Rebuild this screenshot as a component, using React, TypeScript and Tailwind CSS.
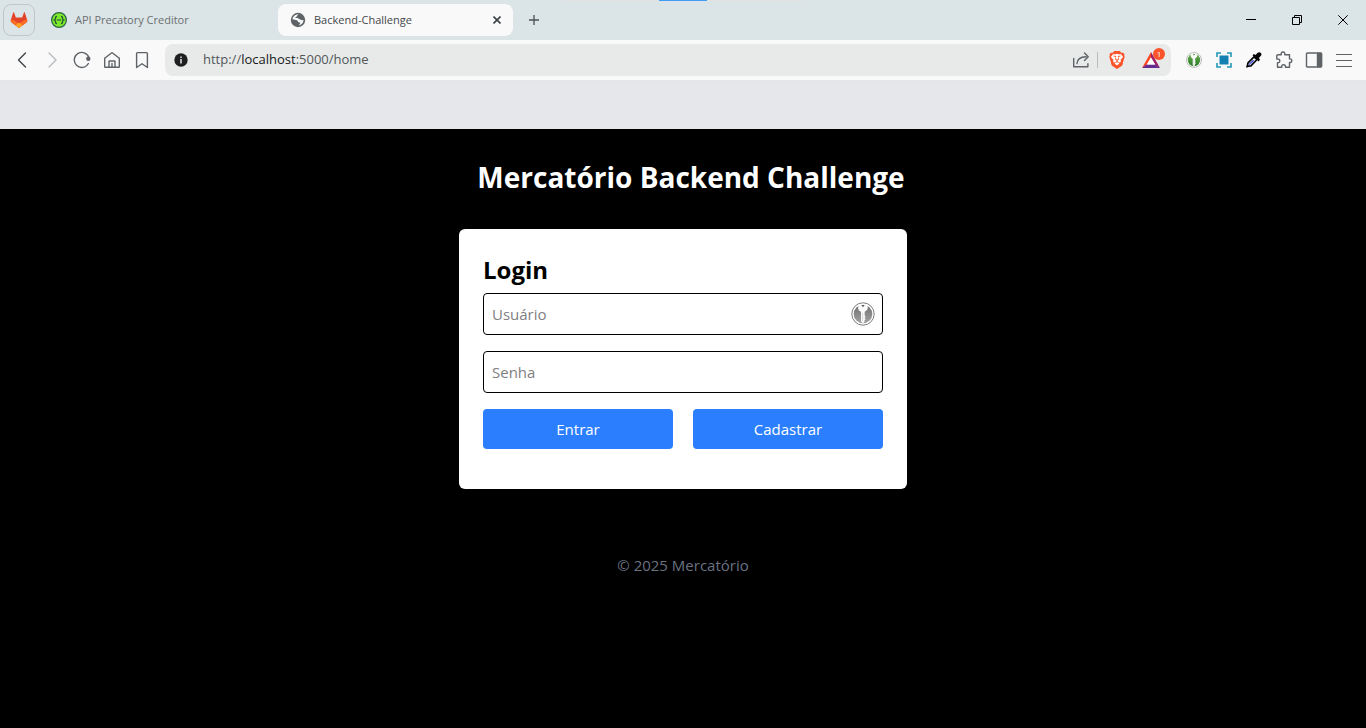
import type { ReactNode } from 'react';
import { SiBrave } from 'react-icons/si';

function GitlabIcon() {
  return (
    <svg viewBox="0 0 18 18" className="size-[18px]" aria-hidden="true">
      <path d="M9 17 1.6 11.5a2.2 2.2 0 0 1-.8-2.4L3.2 1.5c.1-.4.6-.4.8 0L5.9 6.6h6.2L14 1.5c.2-.4.7-.4.8 0l2.4 7.600c.3.9 0 1.9-.8 2.400z" fill="#e24329" />
      <path d="M9 17 5.5 14.3 1.6 11.5a2.200 2.200 0 0 1-.8-2.400L1 8.400c1.500.1 3 .8 4.200 1.700L9 13l3.800-2.900C14 9.200 15.500 8.500 17 8.400l.2.7c.3.9 0 1.900-.8 2.400z" fill="#fc6d26" />
      <path d="M9 17l-3.600-2.700L9 11.500l3.600 2.800z" fill="#fca326" />
    </svg>
  );
}

function SwaggerIcon() {
  return (
    <svg viewBox="0 0 16 16" className="size-4 shrink-0" aria-hidden="true">
      <circle cx="8" cy="8" r="7.4" fill="#7ce82a" stroke="#2d6546" strokeWidth="1.2" />
      <path d="M6 4.300c-1.300 0-1.500.5-1.500 1.600S4.300 7.700 3.400 8c.9.300 1.100 1 1.100 2.100s.2 1.600 1.500 1.600M10 4.300c1.300 0 1.500.5 1.500 1.600s.2 1.800 1.100 2.100c-.9.300-1.100 1-1.100 2.100s-.2 1.600-1.500 1.600M5.800 8h4.400" fill="none" stroke="#204b38" strokeWidth="1.2" />
    </svg>
  );
}

function GlobeIcon() {
  return (
    <svg viewBox="0 0 16 16" className="size-4 shrink-0" aria-hidden="true">
      <circle cx="8" cy="8" r="7.2" fill="#5f6368" />
      <path d="M8.800 2.200c-.8.500-1.700.7-1.600 1.600.1.700-.7.900-1.400 1.100-.5.200-.3 1 .2 1.200.9.200 2.200-.2 2.700.6.400.7 1.500.4 2.100 1 .5.500 1.200.5 2.700.4-.1 2.800-1.800 4.700-4.400 5.300.2-1.100 1.200-1.300 1.100-2.300-.1-.9-1.200-.8-1.900-1.200-.8-.5-.5-1.500-1.400-1.600C5.500 8.200 4.300 7.400 2.500 7.300c.2-3 3.300-5.300 6.300-5.100z" fill="#f9f9f9" />
      <path d="M3 9.200c.9 0 2.400 0 2.700 1 .2.800.9.900 1 1.700 0 .6-.4 1-.7 1.300A5.600 5.600 0 0 1 3 9.200z" fill="#5f6368" />
      <path d="M9.800 3.600c.9.100 1.800.6 2.300 1.300-.5.700-1.500.6-2 .1-.4-.4-.6-.9-.3-1.400z" fill="#5f6368" />
    </svg>
  );
}

function LineIcon({ children, className = 'text-[#5f6368]' }: { children: ReactNode; className?: string }) {
  return (
    <svg viewBox="0 0 18 18" className={`size-[18px] ${className}`} fill="none" stroke="currentColor" strokeWidth="1.4" strokeLinecap="round" strokeLinejoin="round" aria-hidden="true">
      {children}
    </svg>
  );
}

function KeyBadge({ tone, className }: { tone: 'green' | 'gray'; className: string }) {
  const id = `key-${tone}`;
  return (
    <svg viewBox="0 0 24 24" className={className} aria-hidden="true">
      <defs>
        <linearGradient id={id} x1="0" y1="0" x2="0" y2="1">
          <stop offset="0" stopColor={tone === 'green' ? '#6fae57' : '#707070'} />
          <stop offset="1" stopColor={tone === 'green' ? '#257a20' : '#a2a2a2'} />
        </linearGradient>
      </defs>
      <circle cx="12" cy="12" r="11.2" fill="#fff" stroke={tone === 'green' ? '#999' : '#7c7c7c'} strokeWidth="1" />
      <circle cx="12" cy="12" r="9.3" fill={`url(#${id})`} />
      <path d="M8.200 2.500 7.100 5.200c-.3 1.800.8 3.700 2.900 4.600v9.800l1.800 1.700 1.700-1.600v-1.500l1.200-1.100-1.200-1.200 1.200-1.300-1-.9V9.700c2.200-1.100 3.400-2.800 3.100-4.700l-1.100-2.500-3.700-.8z" fill="#fafafa" />
      <path d="M10.400 3h3.200L12 5.200z" fill={tone === 'green' ? '#3d7936' : '#555'} />
      <path d="M11.600 11v8" stroke="#ccc" strokeWidth=".8" />
    </svg>
  );
}

function ToolButton({ label, children }: { label: string; children: ReactNode }) {
  return (
    <button type="button" aria-label={label} className="flex size-[30px] items-center justify-center">
      {children}
    </button>
  );
}

function WindowButton({ label, children }: { label: string; children: ReactNode }) {
  return (
    <button type="button" aria-label={label} className="flex h-10 w-[46px] items-center justify-center">
      <svg viewBox="0 0 10 10" className="size-[10px]" fill="none" stroke="#000" aria-hidden="true">
        {children}
      </svg>
    </button>
  );
}

function TabStrip() {
  return (
    <div className="relative flex h-10 items-center gap-1 bg-[#dbe4e6] pl-[3px] text-[11px]">
      <button type="button" aria-label="GitLab" className="flex size-8 items-center justify-center rounded-lg border border-[#c1c7c9]">
        <GitlabIcon />
      </button>
      <button type="button" className="flex h-8 w-[235px] items-center gap-2 px-3 text-[#6b7072]">
        <SwaggerIcon />
        <span>API Precatory Creditor</span>
      </button>
      <div className="flex h-8 w-[235px] items-center gap-2 rounded-lg bg-[#f9f9f9] px-3 text-[#44484a]">
        <GlobeIcon />
        <span className="flex-1">Backend-Challenge</span>
        <button type="button" aria-label="Close tab">
          <svg viewBox="0 0 8 8" className="size-2" stroke="#3c4043" strokeWidth="1.6" aria-hidden="true">
            <path d="M.5.5l7 7M7.500.5l-7 7" />
          </svg>
        </button>
      </div>
      <button type="button" aria-label="New tab" className="flex size-[34px] items-center justify-center">
        <svg viewBox="0 0 10 10" className="size-[10px]" stroke="#4b5154" strokeWidth="1.3" aria-hidden="true">
          <path d="M5 0v10M0 5h10" />
        </svg>
      </button>
      <div className="ml-auto flex">
        <WindowButton label="Minimize"><path d="M0 4.500h10" /></WindowButton>
        <WindowButton label="Restore"><path d="M.5 2.500h7v7h-7zM2.500 2.500v-2h7v7h-2" /></WindowButton>
        <WindowButton label="Close"><path d="M.3.3l9.400 9.400M9.700.3.3 9.700" /></WindowButton>
      </div>
      <div className="absolute inset-x-0 top-0 mx-auto flex h-px w-[242px] justify-center bg-[#e3e3e3]">
        <div className="w-12 bg-[#429bf5]" />
      </div>
    </div>
  );
}

function Toolbar() {
  return (
    <div className="flex h-[41px] items-center gap-2 border-b border-[#e4e5e6] bg-[#f9f9f9] px-[7px]">
      <div className="flex">
        <ToolButton label="Back"><LineIcon className="text-[#3f4447]"><path d="M12.500 2 5.500 9l7 7" /></LineIcon></ToolButton>
        <ToolButton label="Forward"><LineIcon className="text-[#b9bcbe]"><path d="m6 2 7 7-7 7" /></LineIcon></ToolButton>
        <ToolButton label="Reload">
          <LineIcon>
            <path d="M15.400 12.500a7.500 7.500 0 1 1 .7-5.300" />
            <circle cx="15.300" cy="7.800" r="1.500" fill="currentColor" />
          </LineIcon>
        </ToolButton>
        <ToolButton label="Home">
          <LineIcon><path d="M1.700 7.600v8.200c0 .3.200.5.500.5h13.600c.3 0 .5-.2.500-.5V7.600c0-.3-.1-.5-.3-.6L9.500 2a.8.8 0 0 0-1 0L2 7c-.2.1-.3.300-.3.600zM6 16v-5.500c0-.3.200-.5.500-.5h5c.3 0 .5.200.5.500V16M9 12.500V16" /></LineIcon>
        </ToolButton>
        <ToolButton label="Bookmark">
          <LineIcon><path d="M3.600 16.500V2.400c0-.5.300-.8.800-.8h9.200c.5 0 .8.300.8.800v14.100L9 12.700z" /></LineIcon>
        </ToolButton>
      </div>
      <div className="flex h-8 flex-1 items-center rounded-lg bg-[#e8eae9] pr-2 pl-[9px]">
        <button type="button" aria-label="Site information" className="mr-[15px]">
          <svg viewBox="0 0 14 14" className="size-[14px]" aria-hidden="true">
            <circle cx="7" cy="7" r="6.7" fill="#1d1f20" />
            <path d="M7 3.400v1.500M7 6v4.400" stroke="#e8eae9" strokeWidth="1.5" />
          </svg>
        </button>
        <div className="flex-1 text-[13px] text-[#51575a]">
          http://<span className="text-[#16191b]">localhost</span>:5000/home
        </div>
        <div className="flex items-center">
          <button type="button" aria-label="Share" className="mr-[7px]">
            <LineIcon><path d="M1.700 7.500v8.300h14.200v-3M5 12.500c.2-4 3.200-6.500 9-6.700M12.500 2l3.700 3.800-3.700 3.800" /></LineIcon>
          </button>
          <span className="mr-[10px] h-4 w-px bg-[#b8bbbc]" />
          <button type="button" aria-label="Brave Shields" className="mr-4 flex size-[18px] items-center justify-center bg-[radial-gradient(circle,#ffffff_55%,transparent_56%)]">
            <SiBrave className="size-[18px] text-[#fb542b]" />
          </button>
          <button type="button" aria-label="Rewards, 1 notification" className="relative mr-[3px]">
            <svg viewBox="0 0 18 18" className="size-[18px]" aria-hidden="true">
              <path d="M9 1v5.500L4.600 14 0 17z" fill="#ff4724" />
              <path d="M9 1v5.500l4.400 7.500 4.600 3z" fill="#9e1f63" />
              <path d="m0 17 4.600-3.500h8.800L18 17z" fill="#662d91" />
              <path d="m9 6.500 4.200 7H4.800z" fill="#fff" />
            </svg>
            <span className="absolute -top-[3px] -right-[5px] flex size-3 items-center justify-center rounded-full bg-[#fb542b] text-[8px] text-white">1</span>
          </button>
        </div>
      </div>
      <div className="flex">
        <ToolButton label="Password manager"><KeyBadge tone="green" className="size-4" /></ToolButton>
        <ToolButton label="Screenshot">
          <svg viewBox="0 0 16 16" className="size-4" aria-hidden="true">
            <path d="M3.500 3.500h9v9h-9z" fill="#147fb2" />
            <path d="M1 5V1h4M11 1h4v4M15 11v4h-4M5 15H1v-4" fill="none" stroke="#2495b8" strokeWidth="1.6" />
          </svg>
        </ToolButton>
        <ToolButton label="Color picker">
          <svg viewBox="0 0 16 16" className="size-4" aria-hidden="true">
            <path d="m8 4.800-6 6L1.500 13.200.9 14.700l1.500-.5 2.500-.4 6.200-6.300z" fill="#f3f5ff" stroke="#050505" strokeWidth="1.7" strokeLinejoin="round" />
            <path d="m6.500 8.300-3.600 3.600-.2 1 1.400-.3 4.600-4.300z" fill="#3747ca" />
            <path d="m6.500 3.200 1.500-1.300 1.500 1L11.700.8c2.400-1.700 4.600.9 3.400 2.700l-2.200 2.600 1.100 1.700-1.400 1.600z" fill="#050505" />
          </svg>
        </ToolButton>
        <ToolButton label="Extensions">
          <LineIcon><path d="M3 3.700h3.300C6 1.900 6.700 1 8 1s2.100.9 1.700 2.700h4.800v4.200c1.500-.1 2.300.6 2.300 1.800s-.8 2-2.300 1.800v4.700h-4c.1-1.800-.6-2.600-1.900-2.600s-2 .8-1.900 2.600H2.500v-4.500c1.600.1 2.300-.6 2.300-1.900S4 7.900 1.800 8V4.700c0-.6.500-1 1.200-1z" /></LineIcon>
        </ToolButton>
        <ToolButton label="Sidebar">
          <LineIcon><rect x="1.500" y="2" width="15" height="14" rx="1" /><path d="M12.500 2.500h4v13h-4z" fill="currentColor" /></LineIcon>
        </ToolButton>
        <ToolButton label="Menu">
          <LineIcon><path d="M1.500 3.500h15M1.500 9.500h15M1.500 15.500h15" strokeWidth="1.2" /></LineIcon>
        </ToolButton>
      </div>
    </div>
  );
}

function LoginCard() {
  return (
    <form className="w-full max-w-md rounded-md bg-white p-6" onSubmit={(event) => event.preventDefault()}>
      <h2 className="mb-2 pt-0.5 text-2xl leading-[30px] font-bold">Login</h2>
      <div className="relative mb-4">
        <input aria-label="Usuário" placeholder="Usuário" className="block w-full rounded border border-black p-2 pr-10 text-black placeholder:text-[#808080]" />
        <KeyBadge tone="gray" className="absolute top-[9px] right-2 size-6" />
      </div>
      <input type="password" aria-label="Senha" placeholder="Senha" className="mb-4 block w-full rounded border border-black p-2 text-black placeholder:text-[#808080]" />
      <div className="mb-4 grid grid-cols-2 gap-5 text-white">
        <button type="submit" className="rounded bg-[#2b7fff] p-2">Entrar</button>
        <button type="button" className="rounded bg-[#2b7fff] p-2">Cadastrar</button>
      </div>
    </form>
  );
}

export default function App() {
  return (
    <div className="flex min-h-screen flex-col bg-black font-['Open_Sans','Noto_Sans',sans-serif]">
      <header>
        <TabStrip />
        <Toolbar />
      </header>
      <nav className="h-12 bg-[#e5e7eb]" aria-label="Main" />
      <main className="flex flex-col items-center px-4 pt-7 text-[15px] leading-6">
        <h1 className="mb-8 pl-4 text-[28px] leading-10 font-bold text-white">Mercatório Backend Challenge</h1>
        <LoginCard />
      </main>
      <footer className="mt-16 text-center text-[15px] leading-6 text-[#6a7282]">© 2025 Mercatório</footer>
    </div>
  );
}
